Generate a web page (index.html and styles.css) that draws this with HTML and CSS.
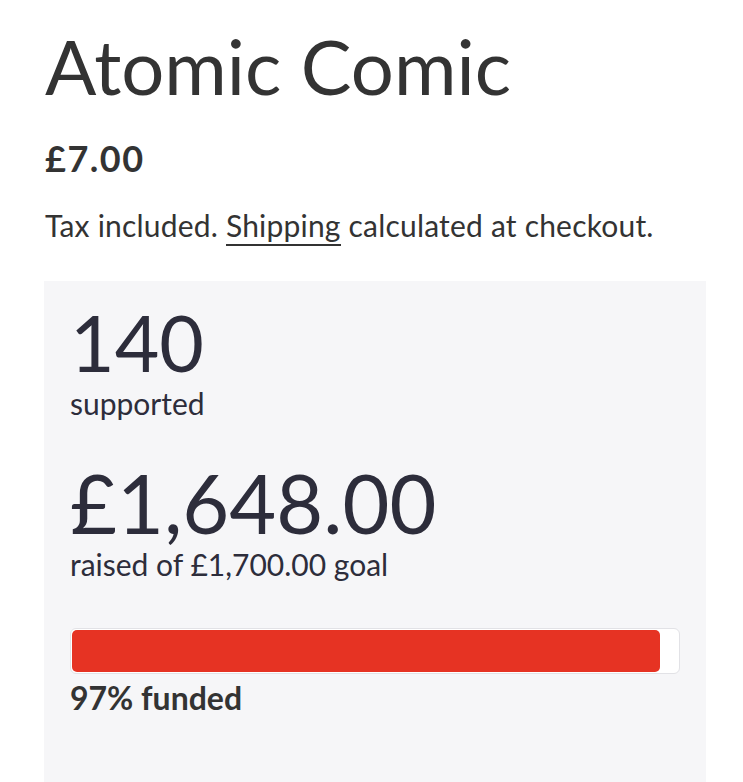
FILE: index.html
```html
<!DOCTYPE html>
<html>
<head>
<meta charset="utf-8">
<link rel="stylesheet" href="styles.css">
</head>
<body>
<main class="product">
  <h1 class="title">Atomic Comic</h1>
  <div class="price">£7.00</div>
  <p class="tax">Tax included. <a href="#" class="link">Shipping</a> calculated at checkout.</p>
  <section class="panel">
    <div class="stat">
      <div class="big big-count">140</div>
      <div class="label">supported</div>
    </div>
    <div class="stat">
      <div class="big big-amount">£1,648.00</div>
      <div class="label">raised of £1,700.00 goal</div>
    </div>
    <div class="progress">
      <div class="fill" style="width:97%"></div>
    </div>
    <div class="funded">97% funded</div>
  </section>
</main>
</body>
</html>
```
FILE: styles.css
```css
html, body {
  margin: 0;
  padding: 0;
  background: #ffffff;
}
body {
  font-family: Lato, "Open Sans", sans-serif;
  color: #333333;
}
.product {
  padding: 0 37px 0 44px;
  display: flex;
  flex-direction: column;
}
.title {
  margin: 21px 0 0 1px;
  font-size: 76px;
  font-weight: 400;
  line-height: 90px;
  color: #333333;
}
.price {
  margin: 27px 0 0 1px;
  font-size: 36px;
  font-weight: 700;
  line-height: 40px;
  letter-spacing: 1.5px;
}
.tax {
  margin: 27px 0 0 1px;
  font-size: 30px;
  line-height: 40px;
  letter-spacing: 0.2px;
}
.link {
  color: #333333;
  text-decoration: none;
  border-bottom: 2px solid #333333;
  padding-bottom: 1px;
}
.panel {
  margin-top: 36px;
  background: #f6f6f8;
  padding: 21px 26px 90px 26px;
  color: #2d2d3b;
  display: flex;
  flex-direction: column;
}
.stat {
  display: flex;
  flex-direction: column;
}
.stat + .stat {
  margin-top: 39px;
}
.big {
  line-height: 80px;
  font-weight: 400;
}
.big-count {
  font-size: 77px;
}
.big-amount {
  font-size: 81px;
}
.label {
  font-size: 30px;
  line-height: 42px;
}
.progress {
  box-sizing: border-box;
  margin-top: 43px;
  height: 46px;
  background: #ffffff;
  border: 1px solid #e2e2e6;
  border-radius: 6px;
  padding: 1px;
  display: flex;
}
.fill {
  background: #e63323;
  border-radius: 5px;
  height: 100%;
}
.funded {
  margin-top: 4px;
  font-size: 32px;
  font-weight: 700;
  line-height: 40px;
  color: #333333;
}
```
